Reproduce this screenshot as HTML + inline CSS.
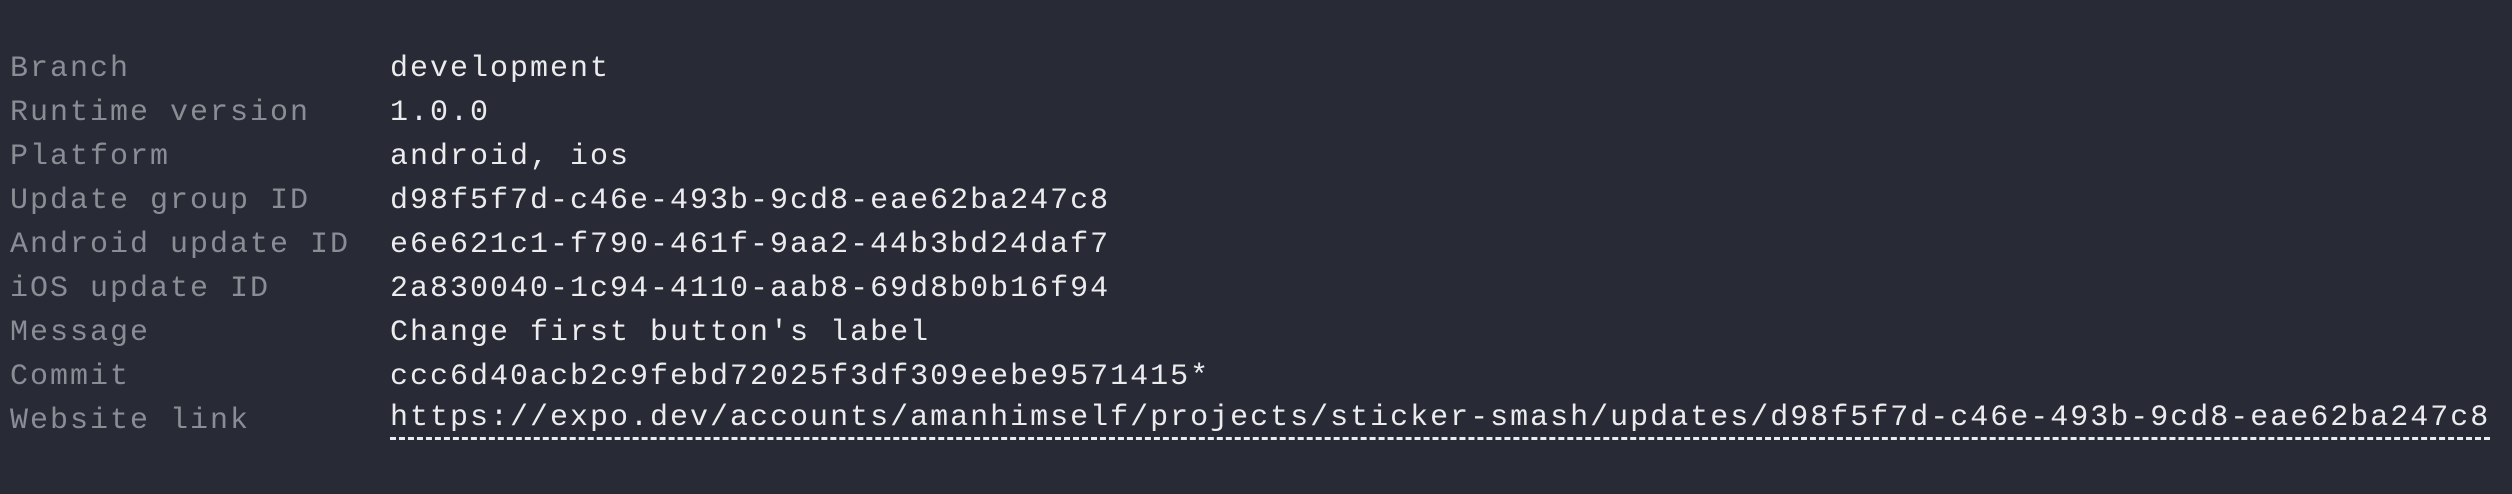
<!DOCTYPE html>
<html><head><style>
html,body{margin:0;padding:0;}
body{width:2512px;height:494px;background:#282a36;overflow:hidden;position:relative;font-family:"Liberation Mono",monospace;font-size:30px;letter-spacing:2px;}
.r{position:absolute;left:0;height:44px;line-height:44px;white-space:pre;}
.l{position:absolute;left:10px;color:#8b8d94;}
.v{position:absolute;left:390px;color:#ececee;}
.u{border-bottom:3px dashed #ececee;line-height:38px;}
</style></head><body>
<div class="r" style="top:47px"><span class="l">Branch</span><span class="v">development</span></div>
<div class="r" style="top:91px"><span class="l">Runtime version</span><span class="v">1.0.0</span></div>
<div class="r" style="top:135px"><span class="l">Platform</span><span class="v">android, ios</span></div>
<div class="r" style="top:179px"><span class="l">Update group ID</span><span class="v">d98f5f7d-c46e-493b-9cd8-eae62ba247c8</span></div>
<div class="r" style="top:223px"><span class="l">Android update ID</span><span class="v">e6e621c1-f790-461f-9aa2-44b3bd24daf7</span></div>
<div class="r" style="top:267px"><span class="l">iOS update ID</span><span class="v">2a830040-1c94-4110-aab8-69d8b0b16f94</span></div>
<div class="r" style="top:311px"><span class="l">Message</span><span class="v">Change first button's label</span></div>
<div class="r" style="top:355px"><span class="l">Commit</span><span class="v">ccc6d40acb2c9febd72025f3df309eebe9571415*</span></div>
<div class="r" style="top:399px"><span class="l">Website link</span><span class="v u">https://expo.dev/accounts/amanhimself/projects/sticker-smash/updates/d98f5f7d-c46e-493b-9cd8-eae62ba247c8</span></div>
</body></html>
